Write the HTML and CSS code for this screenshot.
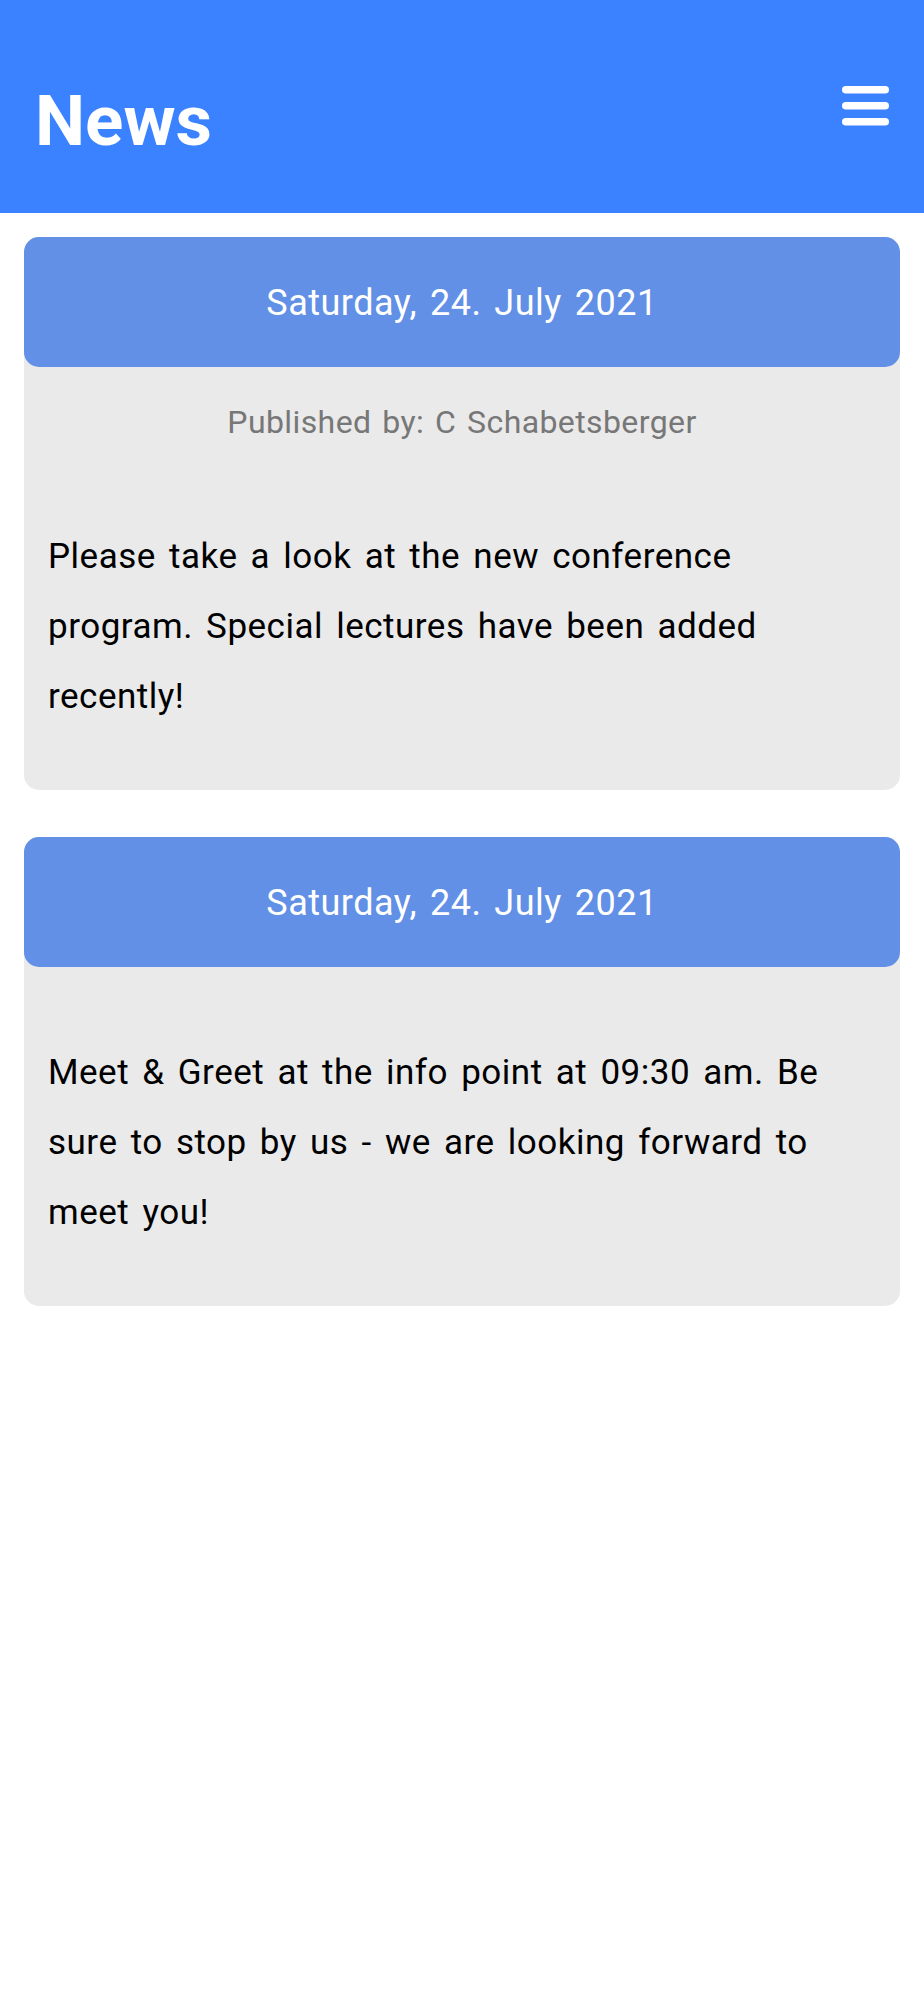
FILE: index.html
```html
<!DOCTYPE html>
<html lang="en">
<head>
<meta charset="utf-8">
<title>News</title>
<link rel="stylesheet" href="styles.css">
</head>
<body>
<header class="topbar">
  <h1 class="title">News</h1>
  <button class="menu" aria-label="Menu">
    <svg width="47" height="40" viewBox="0 0 47 40" aria-hidden="true">
      <rect x="0" y="0" width="47" height="7.5" rx="3.75" fill="#fff"/>
      <rect x="0" y="16" width="47" height="7.5" rx="3.75" fill="#fff"/>
      <rect x="0" y="32" width="47" height="7.5" rx="3.75" fill="#fff"/>
    </svg>
  </button>
</header>
<main class="feed">
  <article class="card">
    <div class="card-date">Saturday, 24. July 2021</div>
    <p class="card-author">Published by: C Schabetsberger</p>
    <p class="card-text card-text-after-author">Please take a look at the new conference program. Special lectures have been added recently!</p>
  </article>
  <article class="card">
    <div class="card-date">Saturday, 24. July 2021</div>
    <p class="card-text">Meet &amp; Greet at the info point at 09:30 am. Be sure to stop by us - we are looking forward to meet you!</p>
  </article>
</main>
</body>
</html>
```
FILE: styles.css
```css
* { box-sizing: border-box; }
html, body { margin: 0; padding: 0; background: #fff; }
body { font-family: Roboto, "Noto Sans", Arial, sans-serif; }

.topbar {
  height: 213px;
  background: #3a82ff;
  display: flex;
  justify-content: space-between;
  align-items: flex-start;
  padding: 86px 35px 0 35px;
}
.title {
  margin: 0;
  font-size: 71px;
  line-height: 70px;
  font-weight: 700;
  color: #fff;
}
.menu {
  border: 0;
  background: none;
  padding: 0;
  margin: 0;
  display: block;
  line-height: 0;
}

.feed {
  padding: 24px 24px;
  display: flex;
  flex-direction: column;
  gap: 47px;
}
.card {
  background: #eaeaea;
  border-radius: 15px;
}
.card-date {
  height: 130px;
  padding-top: 46px;
  background: #6190e6;
  border-radius: 15px;
  color: #fff;
  text-align: center;
  font-size: 36px;
  line-height: 41px;
  letter-spacing: 0.5px;
  word-spacing: 3.5px;
}
.card-author {
  margin: 37px 0 0;
  text-align: center;
  color: #777;
  font-size: 32px;
  line-height: 37.5px;
  letter-spacing: 0.4px;
  word-spacing: 2.5px;
}
.card-text {
  margin: 0;
  padding: 71px 24px 58px;
  font-size: 35px;
  line-height: 70px;
  letter-spacing: 0.5px;
  word-spacing: 4px;
  color: #000;
}
.card-text-after-author {
  padding-top: 80px;
}
```
